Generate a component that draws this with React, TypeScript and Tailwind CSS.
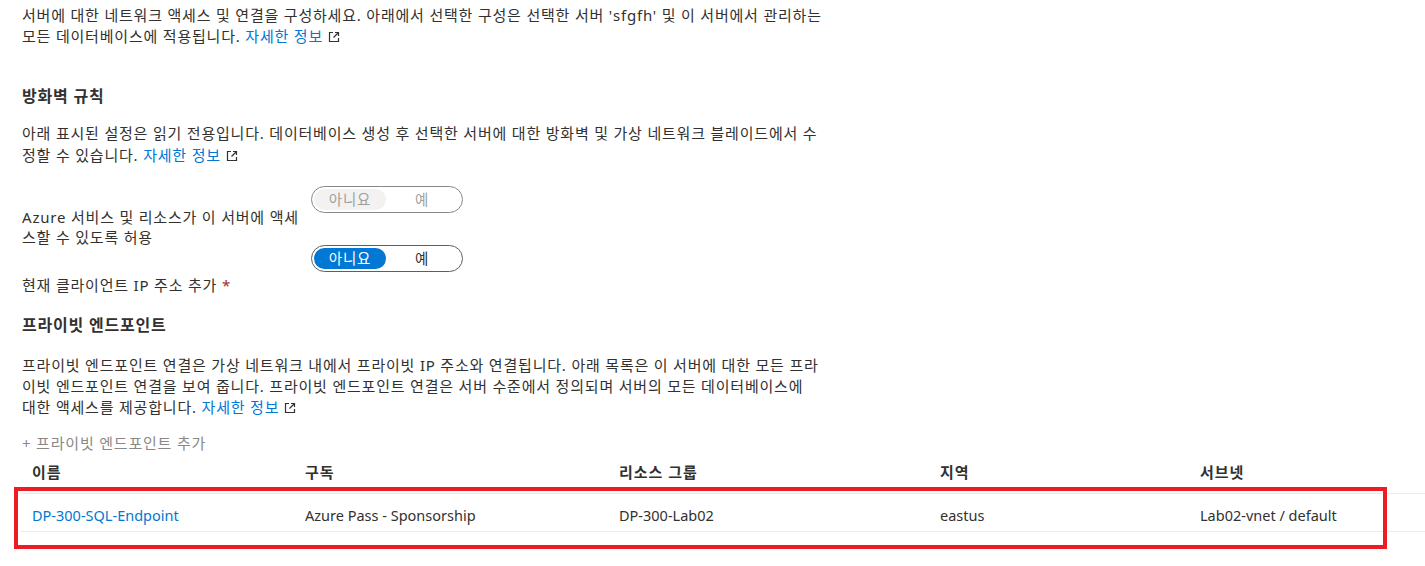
import React from 'react';

function ExternalIcon() {
  return (
    <svg className="inline-block ml-[5px] -mt-[2px] align-middle" width="12" height="12" viewBox="0 0 12 12" fill="none">
      <path d="M5 1.5H1.5v9h9V7" stroke="#323130" strokeWidth="1.2" />
      <path d="M7 1.5h3.5V5M10.5 1.5L5.5 6.5" stroke="#323130" strokeWidth="1.2" />
    </svg>
  );
}

function LearnMore() {
  return (
    <a className="text-[#0078d4] whitespace-nowrap">
      자세한 정보
      <ExternalIcon />
    </a>
  );
}

function Toggle({ value, disabled = false }: { value: boolean; disabled?: boolean }) {
  const onPill = disabled
    ? 'bg-[#f3f2f1] text-[#a19f9d]'
    : 'bg-[#0078d4] text-white';
  return (
    <div
      className={`flex items-center w-[152px] h-[27px] rounded-full border p-[2px] ${
        disabled ? 'border-[#8a8886]' : 'border-[#605e5c]'
      }`}
    >
      <div
        className={`w-[72px] h-[21px] rounded-full flex items-center justify-center text-[14.5px] leading-[21px] ${
          !value ? onPill : 'text-[#323130]'
        }`}
      >
        아니요
      </div>
      <div
        className={`w-[72px] h-[21px] rounded-full flex items-center justify-center text-[14.5px] leading-[21px] ${
          value ? onPill : disabled ? 'text-[#a19f9d]' : 'text-[#323130]'
        }`}
      >
        예
      </div>
    </div>
  );
}

const rows = [
  {
    name: 'DP-300-SQL-Endpoint',
    sub: 'Azure Pass - Sponsorship',
    group: 'DP-300-Lab02',
    region: 'eastus',
    subnet: 'Lab02-vnet / default',
  },
];

export default function App() {
  return (
    <div className="relative w-[1425px] h-[566px] overflow-hidden bg-white text-[#323130] font-['Noto_Sans','Noto_Sans_CJK_KR',sans-serif] text-[15px] tracking-[0.8px]">
      <div className="pl-[22px] w-[880px]">
        <p className="pt-[5px] leading-[21px]">
          서버에 대한 네트워크 액세스 및 연결을 구성하세요. 아래에서 선택한 구성은 선택한 서버 'sfgfh' 및 이 서버에서 관리하는
          <br />
          모든 데이터베이스에 적용됩니다. <LearnMore />
        </p>

        <h2 className="mt-[38px] text-[16px] leading-[22px] font-bold">방화벽 규칙</h2>
        <p className="mt-[15px] leading-[22px]">
          아래 표시된 설정은 읽기 전용입니다. 데이터베이스 생성 후 선택한 서버에 대한 방화벽 및 가상 네트워크 블레이드에서 수
          <br />
          정할 수 있습니다. <LearnMore />
        </p>

        <div className="mt-[20px] flex h-[59px]">
          <div className="w-[289px] pt-[21px] leading-[20px] whitespace-nowrap">
            Azure 서비스 및 리소스가 이 서버에 액세
            <br />
            스할 수 있도록 허용
          </div>
          <Toggle value={false} disabled />
        </div>
        <div className="flex h-[50px]">
          <div className="w-[289px] pt-[30px] leading-[20px] whitespace-nowrap">
            현재 클라이언트 IP 주소 추가 <span className="text-[#a4262c]">*</span>
          </div>
          <Toggle value={false} />
        </div>

        <h2 className="mt-[19px] text-[16px] leading-[22px] font-bold">프라이빗 엔드포인트</h2>
        <p className="mt-[19px] leading-[21px]">
          프라이빗 엔드포인트 연결은 가상 네트워크 내에서 프라이빗 IP 주소와 연결됩니다. 아래 목록은 이 서버에 대한 모든 프라
          <br />
          이빗 엔드포인트 연결을 보여 줍니다. 프라이빗 엔드포인트 연결은 서버 수준에서 정의되며 서버의 모든 데이터베이스에
          <br />
          대한 액세스를 제공합니다. <LearnMore />
        </p>

        <div className="mt-[15px] leading-[21px] text-[#8a8886]">+ 프라이빗 엔드포인트 추가</div>
      </div>

      <div className="ml-[20px] mt-[8px]">
        <div className="grid grid-cols-[273px_314px_321px_260px_1fr] leading-[20px] font-bold text-[15px] tracking-[1px]">
          <div className="pl-[12px]">이름</div>
          <div className="pl-[12px]">구독</div>
          <div className="pl-[12px]">리소스 그룹</div>
          <div className="pl-[12px]">지역</div>
          <div className="pl-[12px]">서브넷</div>
        </div>
        {rows.map((r) => (
          <div
            key={r.name}
            className="mt-[11px] grid grid-cols-[273px_314px_321px_260px_1fr] border-y border-[#edebe9] pt-[11px] pb-[6px] leading-[20px] text-[14.5px] tracking-normal"
          >
            <div className="pl-[12px] text-[#0078d4]">{r.name}</div>
            <div className="pl-[12px]">{r.sub}</div>
            <div className="pl-[12px]">{r.group}</div>
            <div className="pl-[12px]">{r.region}</div>
            <div className="pl-[12px]">{r.subnet}</div>
          </div>
        ))}
      </div>

      <div className="absolute left-[14px] top-[487px] w-[1373px] h-[62px] border-[4px] border-[#ed1c24] pointer-events-none" />
    </div>
  );
}
